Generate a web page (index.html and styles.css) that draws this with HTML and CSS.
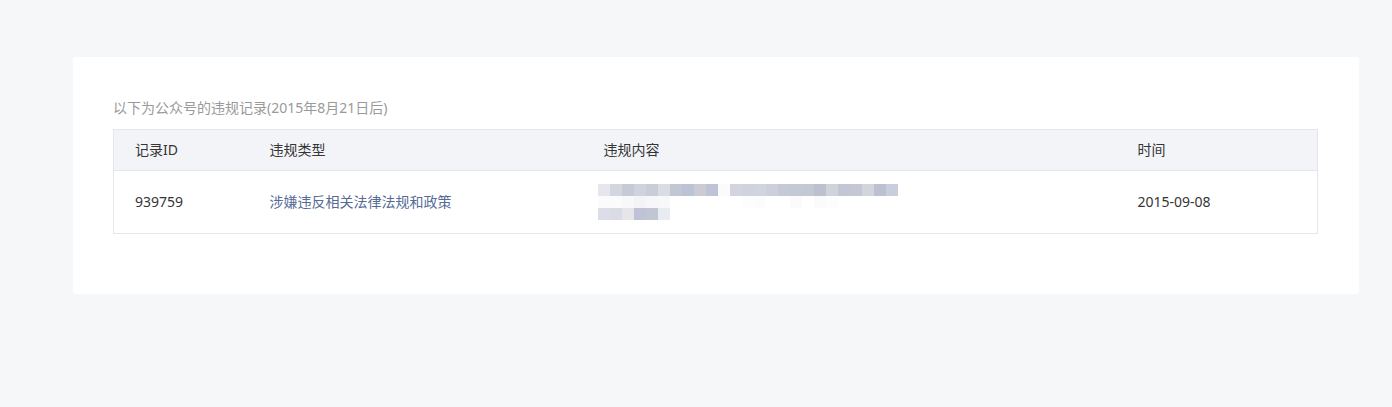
FILE: index.html
```html
<!DOCTYPE html>
<html lang="zh-CN">
<head>
<meta charset="utf-8">
<title>违规记录</title>
<link rel="stylesheet" href="styles.css">
</head>
<body>
<div class="card">
  <p class="caption">以下为公众号的违规记录(2015年8月21日后)</p>
  <table class="records">
    <colgroup>
      <col class="c-id"><col class="c-type"><col class="c-content"><col class="c-time">
    </colgroup>
    <thead>
      <tr><th>记录ID</th><th>违规类型</th><th>违规内容</th><th>时间</th></tr>
    </thead>
    <tbody>
      <tr>
        <td>939759</td>
        <td><a class="link" href="#">涉嫌违反相关法律法规和政策</a></td>
        <td>
          <div class="mosaic">
            <div class="mrow">
              <span style="background:#e6e7ec"></span><span style="background:#d3d6df"></span><span style="background:#c6cad7"></span><span style="background:#cfd3de"></span><span style="background:#c9cdd8"></span><span style="background:#d9dce5"></span><span style="background:#c3c6d3"></span><span style="background:#bcc3d5"></span><span style="background:#cbcad5"></span><span style="background:#bec4d6"></span><span style="background:#fbfbfc"></span><span style="background:#d2d5df"></span><span style="background:#d0d3de"></span><span style="background:#d0d4de"></span><span style="background:#cdd0da"></span><span style="background:#c6cad7"></span><span style="background:#c3c9d6"></span><span style="background:#c3c8d5"></span><span style="background:#bdc0d0"></span><span style="background:#d0d3dc"></span><span style="background:#c3c6d4"></span><span style="background:#c5c8d4"></span><span style="background:#d3d5dc"></span><span style="background:#bcc0d0"></span><span style="background:#c8cfdc"></span>
            </div>
            <div class="mrow">
              <span style="background:#fbfbfc"></span><span style="background:#fbfbfc"></span><span style="background:#f8f8fa"></span><span style="background:#f3f4f7"></span><span style="background:#f7f7f9"></span><span style="background:#f8f8fa"></span><span></span><span></span><span></span><span></span><span></span><span></span><span style="background:#fdfdfd"></span><span style="background:#fcfcfc"></span><span></span><span></span><span style="background:#fbfbfb"></span><span></span><span style="background:#fbfbfb"></span><span style="background:#fdfdfd"></span>
            </div>
            <div class="mrow">
              <span style="background:#dcdde6"></span><span style="background:#dadce5"></span><span style="background:#e6e5ea"></span><span style="background:#bec4d6"></span><span style="background:#c1c6d3"></span><span style="background:#e8ebf2"></span>
            </div>
          </div>
        </td>
        <td>2015-09-08</td>
      </tr>
    </tbody>
  </table>
</div>
</body>
</html>
```
FILE: styles.css
```css
html, body {
  margin: 0;
  padding: 0;
  background: #f6f7f9;
}
body {
  font-family: "Noto Sans", "Noto Sans CJK SC", sans-serif;
  font-size: 14px;
  color: #353535;
  padding: 57px 33px 113px 73px;
}
.card {
  background: #fff;
  border-radius: 3px;
  padding: 41px 41px 60px 40px;
}
.caption {
  margin: 0 0 11px;
  line-height: 20px;
  font-size: 14px;
  color: #9a9a9a;
}
.records {
  width: 100%;
  border-collapse: collapse;
  table-layout: fixed;
  border: 1px solid #e4e6eb;
}
.c-id { width: 135px; }
.c-type { width: 334px; }
.c-content { width: 534px; }
.records th {
  background: #f3f4f8;
  font-weight: normal;
  text-align: left;
  height: 40px;
  padding: 0 0 0 21px;
  border-bottom: 1px solid #e4e6eb;
  line-height: 20px;
  color: #353535;
}
.records td {
  height: 62px;
  padding: 0 0 0 21px;
  vertical-align: middle;
  line-height: 20px;
  color: #353535;
}
.link {
  color: #576b95;
  text-decoration: none;
}
.mosaic {
  display: flex;
  flex-direction: column;
  margin-left: -6px;
}
.mrow {
  display: flex;
  height: 12px;
}
.mrow span {
  width: 12px;
  height: 12px;
  flex: none;
}
```
